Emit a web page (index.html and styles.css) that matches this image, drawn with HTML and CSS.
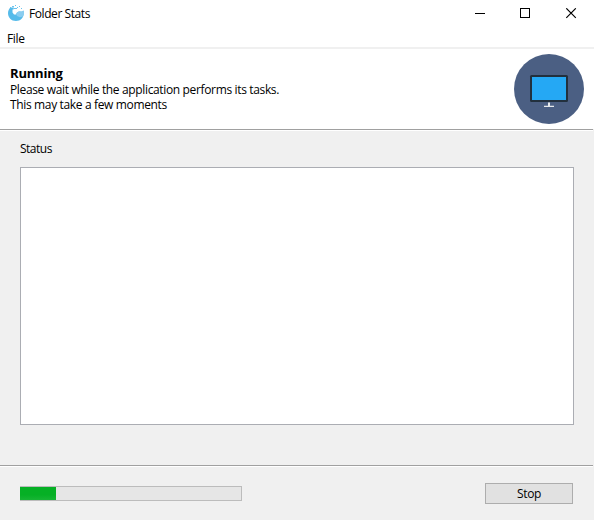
FILE: index.html
```html
<!DOCTYPE html>
<html lang="en">
<head>
<meta charset="utf-8">
<title>Folder Stats</title>
<link rel="stylesheet" href="styles.css">
</head>
<body>
<div class="window">
  <header class="titlebar">
    <svg class="app-icon" width="18" height="18" viewBox="0 0 18 18">
      <path d="M3.500 3.500H7L6.500 5.500H5.500V8.500L7 10.500H9L10 8.500 12 7.500 16.800 8.500C17 13.500 13.500 17 9 17 4.300 17 1 13.500 1 9 1 6.800 2 4.800 3.500 3.500z" fill="#56bbea"/>
      <path d="M10 8.500L12 7.300H14.500L17 6.500V9.500L16 12.500 13 13.300 10 12 9 10z" fill="#8bcdf0"/>
      <path d="M5 2h2v1H5zM8 1h1v1H8zM7 4h3v1H7zM10 3h1v1h-1zM14 4h1v1h-1zM3 3h1v1H3zM12 2h1v1h-1z" fill="#6cc4ed"/>
    </svg>
    <span class="title">Folder Stats</span>
    <svg class="controls" width="104" height="12" viewBox="0 0 104 12" fill="none" stroke="#000" shape-rendering="crispEdges">
      <path d="M0 5.500h10M45.500.5h9v9h-9z"/>
      <path d="M91.300.3l9.500 9.500m0-9.500l-9.500 9.500" shape-rendering="auto" stroke-width="1.150"/>
    </svg>
  </header>
  <nav class="menubar"><span class="menu">File</span></nav>
  <section class="banner">
    <div class="message">
      <h1>Running</h1>
      <p>Please wait while the application performs its tasks.<br>This may take a few moments</p>
    </div>
    <svg class="monitor" width="70" height="70" viewBox="0 0 70 70">
      <circle cx="35" cy="35" r="35" fill="#4b5f83"/>
      <rect x="16" y="21" width="38" height="27" rx="1.500" fill="#22303d"/>
      <rect x="18" y="23" width="34" height="23" fill="#25a8f4"/>
      <path d="M34 48.500h2v3.200h4V53H30v-1.300h4z" fill="#e6e9ec"/>
    </svg>
  </section>
  <div class="rule"></div>
  <main class="content">
    <div class="status">Status</div>
    <div class="log"></div>
  </main>
  <div class="rule"></div>
  <footer class="footer">
    <div class="progress"><div class="bar"></div></div>
    <button class="stop"><span>Stop</span></button>
  </footer>
</div>
</body>
</html>
```
FILE: styles.css
```css
* { box-sizing: border-box; }
body {
  margin: 0;
  background: #f0f0f0;
  color: #000;
  font: 12px/15px "Segoe UI", "Open Sans", sans-serif;
  letter-spacing: -0.35px;
}
h1, p { margin: 0; }
svg { display: block; }
.window { display: flex; flex-direction: column; width: 594px; height: 520px; }
.titlebar {
  display: flex;
  height: 28px;
  padding: 4px 15px 0 7px;
  background: #fff;
}
.title { margin: 2px 0 0 4px; letter-spacing: -0.42px; }
.controls { margin: 4px 0 0 auto; }
.menubar {
  height: 21px;
  padding: 3px 7px 0;
  background: #fff;
  border-bottom: 2px solid #f0f0f0;
}
.banner {
  display: flex;
  justify-content: space-between;
  height: 80px;
  padding: 5px 10px 0;
  background: #fff;
}
.message { padding-top: 11px; white-space: nowrap; }
h1 {
  margin-bottom: 1px;
  font-size: 13px;
  line-height: 16px;
  font-weight: 700;
  letter-spacing: -0.2px;
}
.rule {
  width: 593px;
  height: 2px;
  border-top: 1px solid #a0a0a0;
  background: #fff;
}
.content { height: 334px; padding: 10px 20px 0; }
.status { height: 26px; letter-spacing: -0.5px; }
.log { height: 258px; background: #fff; border: 1px solid #abadb3; }
.footer {
  display: flex;
  flex: 1;
  justify-content: space-between;
  align-items: flex-start;
  padding: 16px 21px 0 20px;
}
.progress {
  width: 222px;
  height: 15px;
  margin-top: 3px;
  background: #e6e6e6;
  border: 1px solid #bcbcbc;
  border-left: 0;
}
.bar { width: 36px; height: 13px; background: linear-gradient(#06b025 60%, #18b535); }
.stop {
  width: 88px;
  height: 21px;
  padding: 0;
  font: inherit;
  letter-spacing: inherit;
  color: inherit;
  background: #e1e1e1;
  border: 1px solid #adadad;
}
```
